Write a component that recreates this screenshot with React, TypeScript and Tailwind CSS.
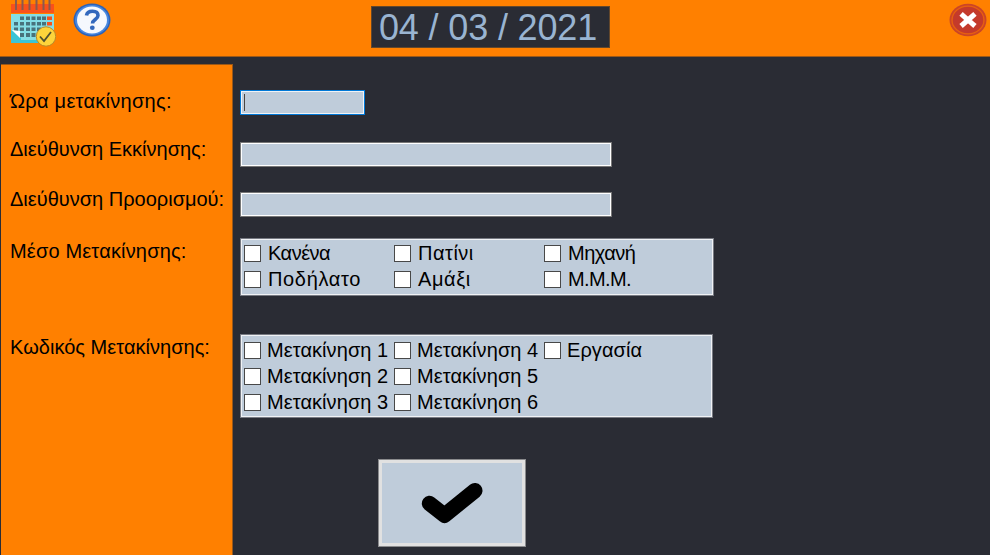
const font = "font-['Liberation_Sans',Arial,sans-serif]";

function CalendarIcon() {
  return (
    <svg width="46" height="48" viewBox="0 0 46 48" className="block">
      <rect x="1" y="4" width="43" height="9" fill="#f9511b" />
      <rect x="1" y="14" width="43" height="29" fill="#84dde5" />
      <path d="M1 40h43v3H1z" fill="#3ec4d5" />
      <g stroke="#8a5a50" strokeWidth="2">
        <path d="M6 0v10M12.500 0v10M19.500 0v10M26.500 0v10M33.500 0v10M39.500 0v10" />
      </g>
      <g fill="#48727c">
        <path d="M10 16.500h4v3.500h-4zM16 16.500h4v3.500h-4zM21.500 16.500h4v3.500h-4zM27 16.500h4v3.500h-4zM32 16.500h4v3.500h-4z" />
        <path d="M4 22h4v3.500H4zM10 22h4v3.500h-4zM16 22h4v3.500h-4zM21.500 22h4v3.500h-4zM27 22h4v3.500h-4zM32 22h4v3.500h-4z" />
        <path d="M4 27.500h4v3.500H4zM10 27.500h4v3.500h-4zM16 27.500h4v3.500h-4zM21.500 27.500h4v3.500h-4zM27 27.500h4v3.500h-4z" />
        <path d="M10 33h4v4h-4zM16 33h4v4h-4zM21.500 33h4v4h-4z" />
      </g>
      <path d="M37 16.500h5v3.500h-5zM37 22h5v3.500h-5z" fill="#f9511b" />
      <path d="M1 30l10 8v5H1z" fill="#3ec4d5" />
      <path d="M2 30l8 1v7z" fill="#fff" />
      <circle cx="36" cy="36.500" r="9.700" fill="#fdd43b" stroke="#b98a28" strokeWidth="1" />
      <path d="M30 36.500l4 4.500 7-9" fill="none" stroke="#50502f" strokeWidth="1.800" />
    </svg>
  );
}

function HelpIcon() {
  return (
    <svg width="38" height="34" viewBox="0 0 38 34" className="block">
      <ellipse cx="19" cy="17" rx="18.500" ry="16.500" fill="#2c62b8" />
      <ellipse cx="19" cy="17" rx="17" ry="15" fill="#4787df" />
      <ellipse cx="19" cy="17" rx="15" ry="13.500" fill="#f5f8fd" />
      <path d="M13.500 12.500C14 9 17 8.300 19.500 8.300c3.500 0 5.500 1.700 5.500 4.200 0 4-5.500 4-5.500 8" fill="none" stroke="#3268bd" strokeWidth="3.600" />
      <ellipse cx="19.300" cy="24.700" rx="2.400" ry="2.200" fill="#3268bd" />
    </svg>
  );
}

function CloseIcon() {
  return (
    <svg width="38" height="34" viewBox="0 0 38 34" className="block">
      <ellipse cx="19" cy="17" rx="18.500" ry="16.200" fill="#cc4526" />
      <ellipse cx="19" cy="17" rx="16" ry="13.900" fill="none" stroke="#e8600f" strokeWidth="1.300" />
      <ellipse cx="19" cy="17" rx="15" ry="13" fill="#c43a2b" />
      <path d="M13.300 12l11.400 10M24.700 12l-11.400 10" stroke="#fff" strokeWidth="5.800" strokeLinecap="square" strokeLinejoin="round" transform="translate(2.300 2) scale(.88)" />
    </svg>
  );
}

function Check({ label, className }: { label: string; className: string }) {
  return (
    <label className="flex h-[26.200px] items-center whitespace-nowrap">
      <span className="h-[17px] w-[17px] shrink-0 border border-[#484848] bg-white" />
      <span className={`text-[20px] leading-[26px] ${className}`}>{label}</span>
    </label>
  );
}

const transport = [
  ["Κανένα", "ml-[7px] tracking-[-0.5px]"],
  ["Πατίνι", "ml-[7px] tracking-[0.5px]"],
  ["Μηχανή", "ml-[7px] tracking-[-0.5px]"],
  ["Ποδήλατο", "ml-[7px] tracking-[0.65px]"],
  ["Αμάξι", "ml-[7px] tracking-[0.6px]"],
  ["Μ.Μ.Μ.", "ml-[7px] tracking-[-0.6px]"],
];

const codes = [
  "Μετακίνηση 1",
  "Μετακίνηση 4",
  "Εργασία",
  "Μετακίνηση 2",
  "Μετακίνηση 5",
  "",
  "Μετακίνηση 3",
  "Μετακίνηση 6",
];

export default function App() {
  return (
    <div className={`flex h-[555px] w-[990px] flex-col overflow-hidden bg-[#2a2c34] text-black ${font}`}>
      <header className="flex h-[57px] shrink-0 items-start border-b border-[#9b5817] bg-[#ff8000]">
        <div className="ml-[10px] w-[46px]"><CalendarIcon /></div>
        <div className="ml-[17px] mt-[3px]"><HelpIcon /></div>
        <div className="ml-[260px] mt-[6px] h-[42px] w-[239px] whitespace-nowrap border border-[#62472c] bg-[#2a2c34] pl-[7px] text-[36px] leading-[41px] tracking-[-0.15px] text-[#99b4d1]">
          04 / 03 / 2021
        </div>
        <button className="ml-[339px] mt-[3px]"><CloseIcon /></button>
      </header>
      <div className="flex flex-1">
        <aside className="ml-px mt-[7px] flex w-[232px] shrink-0 flex-col whitespace-nowrap border-r border-t border-[#9b5817] bg-[#ff8000] pl-[9px] text-[20px] leading-[24px]">
          <div className="mt-[24px] tracking-[0.27px]">Ώρα μετακίνησης:</div>
          <div className="mt-[24px]">Διεύθυνση Εκκίνησης:</div>
          <div className="mt-[26px]">Διεύθυνση Προορισμού:</div>
          <div className="mt-[28px] tracking-[0.17px]">Μέσο Μετακίνησης:</div>
          <div className="mt-[72px] tracking-[0.03px]">Κωδικός Μετακίνησης:</div>
        </aside>
        <main className="ml-[7px] flex flex-col items-start">
          <div className="mt-[33px] h-[25px] w-[125px] border border-[#0078d7] bg-[#bfccda]">
            <div className="h-full border border-[#f0f3f6] pl-[2px] pt-[2px]">
              <div className="h-[17px] w-px bg-[#4a4440]" />
            </div>
          </div>
          <div className="mt-[27px] h-[25px] w-[372px] border border-[#777777] bg-[#bfccda]"><div className="h-full border border-white" /></div>
          <div className="mt-[25px] h-[25px] w-[372px] border border-[#777777] bg-[#bfccda]"><div className="h-full border border-white" /></div>
          <div className="mt-[21px] h-[58px] w-[474px] border border-[#777a82] bg-[#bfccda]">
            <div className="grid h-full grid-cols-[150px_150px_150px] content-start border border-[#f0f2f5] pl-[2px]">
              {transport.map(([label, c]) => <Check key={label} label={label} className={c} />)}
            </div>
          </div>
          <div className="mt-[38px] h-[84px] w-[473px] border border-[#777a82] bg-[#bfccda]">
            <div className="grid h-full grid-cols-[150px_150px_150px] content-start border border-[#f0f2f5] pl-[2px] pt-px">
              {codes.map((label, i) => label ? <Check key={i} label={label} className="ml-[6px] tracking-[0.07px]" /> : <span key={i} />)}
            </div>
          </div>
          <button className="ml-[138px] mt-[41px] h-[88px] w-[148px] border border-[#8a8b8d] bg-[#bfccda]">
            <span className="flex h-full items-center justify-center border-[3px] border-[#e1e1e1]">
              <svg width="62" height="42" viewBox="0 0 62 42">
                <path d="M8.500 21.500L23.500 33.300L53.800 8.700" fill="none" stroke="#000" strokeWidth="15.400" strokeLinecap="round" strokeLinejoin="round" />
              </svg>
            </span>
          </button>
        </main>
      </div>
    </div>
  );
}
